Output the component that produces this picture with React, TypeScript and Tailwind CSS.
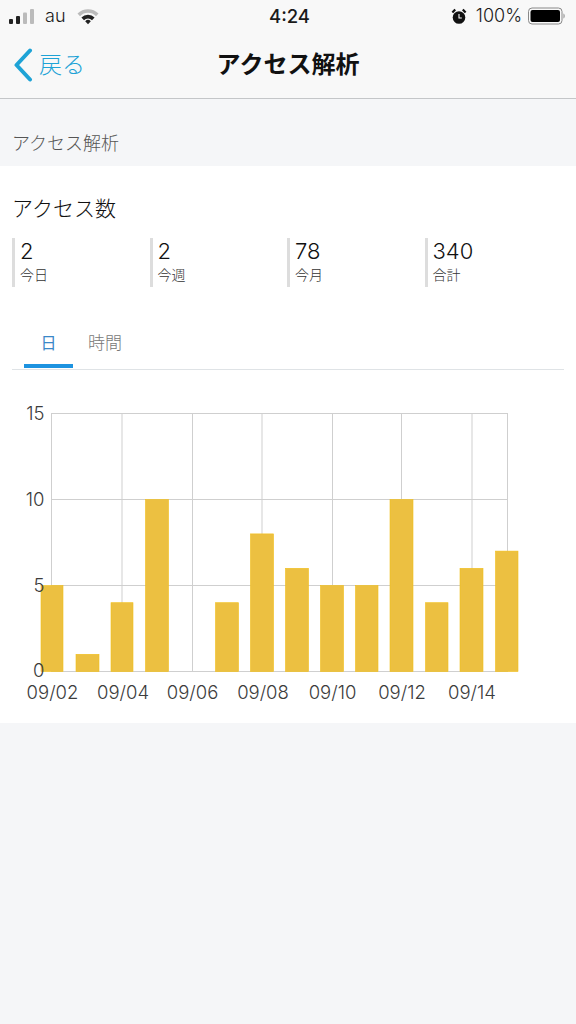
const jp = "font-['Inter','Noto_Sans_CJK_JP',sans-serif]"

const stats = [
  { value: "2", label: "今日" },
  { value: "2", label: "今週" },
  { value: "78", label: "今月" },
  { value: "340", label: "合計" },
]

const bars = [
  { x: 41, w: 22, v: 5 },
  { x: 76, w: 23, v: 1 },
  { x: 111, w: 22, v: 4 },
  { x: 145.5, w: 23, v: 10 },
  { x: 215.5, w: 23, v: 4 },
  { x: 250.5, w: 23, v: 8 },
  { x: 285.5, w: 23, v: 6 },
  { x: 320.5, w: 23, v: 5 },
  { x: 355.5, w: 22.5, v: 5 },
  { x: 390, w: 23, v: 10 },
  { x: 425.5, w: 22.5, v: 4 },
  { x: 460, w: 23, v: 6 },
  { x: 495.5, w: 22.5, v: 7 },
]

const gridX = [122, 192.5, 262, 332.5, 401.5, 472]
const gridY = [{ y: 499.5, t: "10" }, { y: 585.5, t: "5" }]
const labels = [
  { x: 52.5, t: "09/02" },
  { x: 123, t: "09/04" },
  { x: 192.5, t: "09/06" },
  { x: 263, t: "09/08" },
  { x: 332.5, t: "09/10" },
  { x: 402, t: "09/12" },
  { x: 472, t: "09/14" },
]

function StatusBar() {
  return (
    <div className="h-[32px] flex items-center justify-between pl-2 pr-[10px] text-[#1a1a1a]">
      <div className="flex items-center">
        <svg width="28" height="17" viewBox="0 0 28 17">
          <rect x="1" y="11" width="4" height="5" rx="1" fill="#222" />
          <rect x="8" y="8" width="4" height="8" rx="1" fill="#222" />
          <rect x="15" y="4.5" width="4" height="11.5" rx="1" fill="#bbb" />
          <rect x="22" y="1" width="4" height="15" rx="1" fill="#bbb" />
        </svg>
        <span className="ml-[9px] text-[18px] font-light leading-none font-['Inter',sans-serif]">au</span>
        <svg className="ml-[11px]" width="22" height="17" viewBox="0 0 22 17">
          <path d="M0.5 5.5 A15 15 0 0 1 21.5 5.5 L19 8.3 A11 11 0 0 0 3 8.3 Z" fill="#bbb" />
          <path d="M4.4 9.6 A9 9 0 0 1 17.6 9.6 L15 12.2 A5.6 5.6 0 0 0 7 12.2 Z" fill="#222" />
          <path d="M8.2 13.2 A4 4 0 0 1 13.8 13.2 L11 16.2 Z" fill="#222" />
        </svg>
      </div>
      <span className="absolute left-[269px] text-[18.5px] leading-none font-medium font-['Inter',sans-serif]">4:24</span>
      <div className="flex items-center">
        <svg width="16" height="17" viewBox="0 0 16 17">
          <circle cx="8" cy="9.5" r="6.3" fill="#111" />
          <path d="M1.4 4.6 L4.2 1.6 M14.6 4.6 L11.8 1.6" stroke="#111" strokeWidth="2.2" />
          <path d="M8 6 V10 H10.8" stroke="#fff" strokeWidth="1.1" fill="none" />
        </svg>
        <span className="ml-[9px] text-[18px] font-light leading-none font-['Inter',sans-serif]">100%</span>
        <svg className="ml-[6px]" width="38" height="18" viewBox="0 0 38 18">
          <rect x="0.5" y="1" width="33.5" height="16" rx="3.5" fill="none" stroke="#888" />
          <rect x="2.5" y="3" width="29.5" height="12" rx="2" fill="#000" />
          <path d="M35.5 6.5 C37 7 37 11 35.5 11.5 Z" fill="#888" />
        </svg>
      </div>
    </div>
  )
}

function NavBar() {
  return (
    <div className="relative h-[67px] flex items-center border-b border-[#c4c6c8]">
      <div className="flex items-center pl-[13px] text-[#1ea3d6]">
        <svg width="20" height="34" viewBox="0 0 20 34">
          <path d="M17 2.5 L3.5 17 L17 31.5" fill="none" stroke="#1ea3d6" strokeWidth="4" strokeLinecap="round" strokeLinejoin="round" />
        </svg>
        <span className="ml-[6px] text-[23px] font-light leading-none">戻る</span>
      </div>
      <span className="absolute left-0 right-0 top-[16px] text-center text-[24px] leading-[34px] font-bold text-[#111]">アクセス解析</span>
    </div>
  )
}

function Chart() {
  return (
    <svg className="block" width="576" height="353" viewBox="0 370 576 353">
      <g stroke="#cfcfcf" strokeWidth="1">
        <rect x="51.5" y="413.5" width="456" height="258" fill="none" />
        {gridX.map((x) => (
          <line key={x} x1={x} y1="413.5" x2={x} y2="671.5" />
        ))}
        {gridY.map((g) => (
          <line key={g.t} x1="51.5" y1={g.y} x2="507.5" y2={g.y} />
        ))}
      </g>
      {bars.map((b) => (
        <rect
          key={b.x}
          x={b.x}
          y={671.5 - b.v * 17.2}
          width={b.w}
          height={b.v * 17.2}
          fill="#ecc041"
          stroke="#f2bf1a"
          strokeWidth="0.6"
        />
      ))}
      <g fill="#3c3c3c" fontFamily="Inter, sans-serif" fontSize="18.5" fontWeight="300">
        <text x="44.5" y="420" textAnchor="end">15</text>
        <text x="44.5" y="506" textAnchor="end">10</text>
        <text x="44.5" y="592" textAnchor="end">5</text>
        <text x="44.5" y="677" textAnchor="end">0</text>
        {labels.map((l) => (
          <text key={l.t} x={l.x} y="699" textAnchor="middle">{l.t}</text>
        ))}
      </g>
    </svg>
  )
}

export default function App() {
  return (
    <div className={`w-[576px] h-[1024px] overflow-hidden bg-[#f5f6f8] ${jp}`}>
      <div className="relative bg-[#f8f8f8]">
        <StatusBar />
        <NavBar />
      </div>
      <div className="h-[67px] flex items-center px-3 pt-[22px] text-[18px] font-light text-[#555]">
        アクセス解析
      </div>
      <div className="bg-white h-[557px]">
        <div className="px-3 pt-[27px] text-[21px] font-light leading-[32px] text-[#111]">アクセス数</div>
        <div className="grid grid-cols-4 pl-3 pr-[14px] mt-[13px]">
          {stats.map((s) => (
            <div key={s.label} className="h-[49px] border-l-[3px] border-[#dddddd] pl-[5px]">
              <div className="text-[22px] font-light leading-[27px] text-[#111]">{s.value}</div>
              <div className="text-[14px] font-light leading-[20px] text-[#333]">{s.label}</div>
            </div>
          ))}
        </div>
        <div className="mx-3 mt-[34px] h-[49px] flex border-b border-[#dfe3e6]">
          <div className="ml-3 w-[49px] h-[47px] border-b-[4px] border-[#1d93e0] text-center text-[16px] leading-[44px] text-[#3a88c8]">日</div>
          <div className="ml-[15px] text-[17px] font-light leading-[44px] text-[#777]">時間</div>
        </div>
        <Chart />
      </div>
    </div>
  )
}
